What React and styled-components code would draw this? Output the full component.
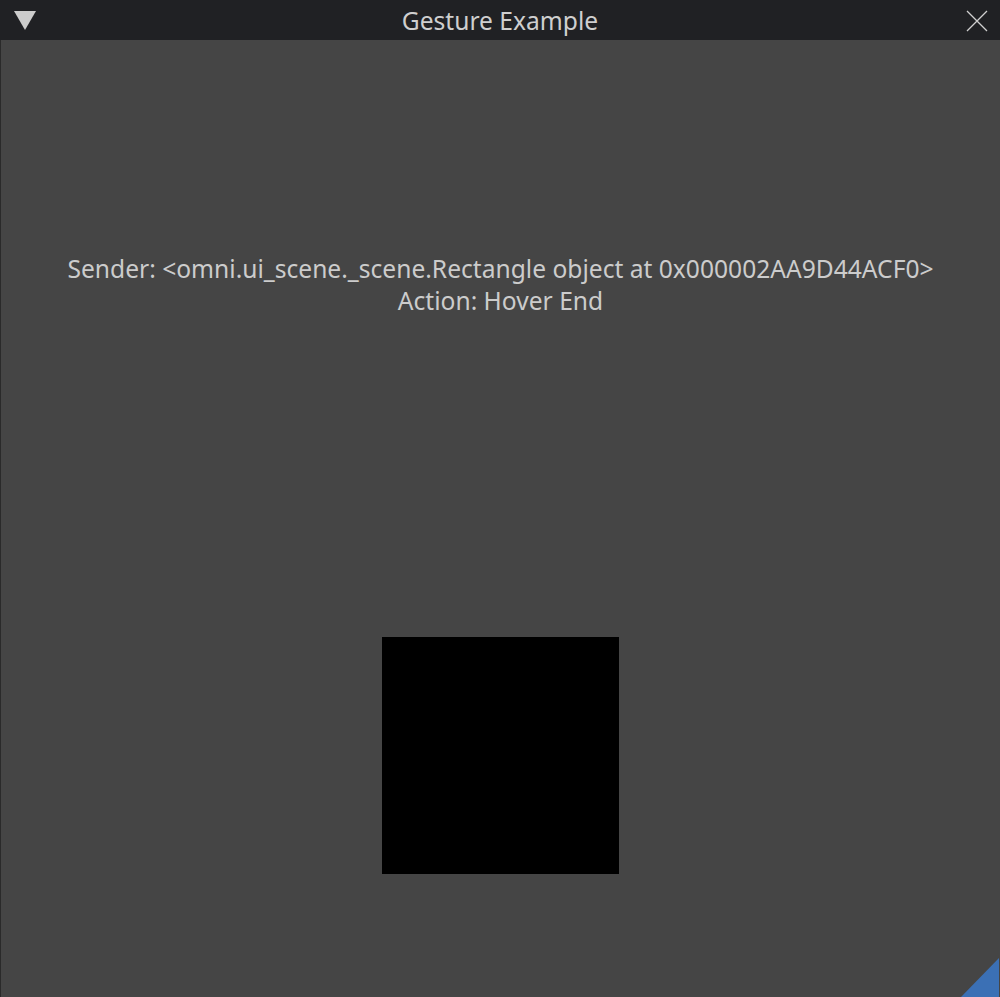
import React from "react";
import styled, { createGlobalStyle } from "styled-components";

const Global = createGlobalStyle`
  html, body { margin: 0; padding: 0; background: #454545; }
  body { font-family: "Noto Sans", "DejaVu Sans", sans-serif; }
`;

const Window = styled.div`
  width: 1000px;
  height: 997px;
  display: flex;
  flex-direction: column;
  background: #454545;
  position: relative;
  overflow: hidden;
`;

const TitleBar = styled.div`
  height: 40px;
  flex: 0 0 40px;
  background: #202124;
  display: grid;
  grid-template-columns: 50px 1fr 50px;
  align-items: center;
`;

const Title = styled.div`
  text-align: center;
  color: #cfcfcf;
  font-size: 24.6px;
  line-height: 40px;
  padding-top: 1px;
`;

const IconSlot = styled.div`
  display: flex;
  align-items: center;
  justify-content: ${(p) => p.$align};
  padding: ${(p) => p.$pad};
  height: 40px;
`;

const Body = styled.div`
  flex: 1;
  display: flex;
  flex-direction: column;
  align-items: center;
  border-left: 1px solid #2a2a2a;
`;

const Info = styled.div`
  margin-top: 213px;
  color: #cccccc;
  font-size: 24.6px;
  line-height: 32px;
  text-align: center;
  white-space: nowrap;
`;

const Square = styled.div`
  margin-top: 320px;
  width: 237px;
  height: 237px;
  background: #000;
  margin-right: 1px;
`;

const Corner = styled.svg`
  position: absolute;
  right: 0;
  bottom: 0;
`;

export default function App() {
  return (
    <>
      <Global />
      <Window>
        <TitleBar>
          <IconSlot $align="flex-start" $pad="0 0 0 14px">
            <svg width="22" height="20" viewBox="0 0 22 20">
              <polygon points="0,0 22,0 11,19" fill="#cccccc" />
            </svg>
          </IconSlot>
          <Title>Gesture Example</Title>
          <IconSlot $align="flex-end" $pad="0 12px 0 0">
            <svg width="22" height="22" viewBox="0 0 22 22">
              <path d="M1 1 L21 21 M21 1 L1 21" stroke="#d0d0d0" strokeWidth="1.3" fill="none" />
            </svg>
          </IconSlot>
        </TitleBar>
        <Body>
          <Info>
            <div>Sender: &lt;omni.ui_scene._scene.Rectangle object at 0x000002AA9D44ACF0&gt;</div>
            <div>Action: Hover End</div>
          </Info>
          <Square />
        </Body>
        <Corner width="40" height="40" viewBox="0 0 40 40">
          <polygon points="1,40 39,1 39,40" fill="#3b70b5" />
        </Corner>
      </Window>
    </>
  );
}
